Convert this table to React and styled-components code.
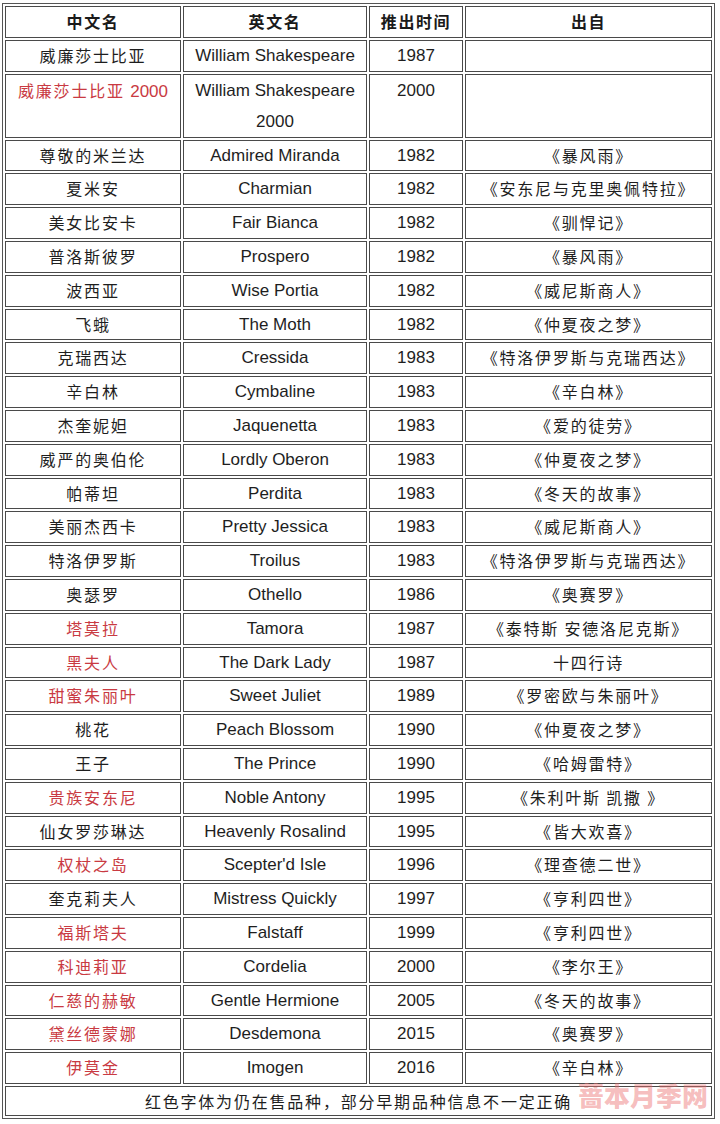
import React from "react"
import styled, { createGlobalStyle } from "styled-components"

const GlobalStyle = createGlobalStyle`
  html, body {
    margin: 0;
    padding: 0;
    background: #fff;
  }
  body {
    font-family: "Liberation Sans", "Noto Sans CJK SC", sans-serif;
    color: #222;
  }
`

const Wrap = styled.div`
  position: relative;
  width: 720px;
  padding: 3px 0 0 2px;
  box-sizing: border-box;
`

const Table = styled.table`
  border-collapse: separate;
  border-spacing: 2px;
  border: 1px solid #555;
  table-layout: fixed;
  width: 713px;
`

const Cell = styled.td`
  border: 1px solid #4a4a4a;
  padding: 0;
  text-align: center;
  vertical-align: top;
  line-height: ${(props) => (props.tall ? "31px" : "29.8px")};
  box-sizing: border-box;
  font-size: ${(props) => (props.cn ? "16px" : "17px")};
  font-family: ${(props) =>
    props.cn
      ? `"Noto Sans CJK SC", sans-serif`
      : `"Liberation Sans", "Noto Sans CJK SC", sans-serif`};
  letter-spacing: ${(props) => (props.cn ? "1.8px" : "0")};
  color: ${(props) => (props.red ? "#c93a42" : "#1e1e1e")};
  overflow: hidden;
`

const Head = styled.th`
  border: 1px solid #4a4a4a;
  padding: 0;
  text-align: center;
  line-height: 29.8px;
  box-sizing: border-box;
  font-family: "Noto Sans CJK SC", sans-serif;
  font-size: 16px;
  font-weight: 700;
  letter-spacing: 1.6px;
  color: #1a1a1a;
  width: ${(props) => props.w}px;
`

const Num = styled.span`
  font-family: "Liberation Sans", sans-serif;
  font-size: 17px;
  letter-spacing: 0;
`

const Note = styled.td`
  border: 1px solid #4a4a4a;
  padding: 0;
  text-align: center;
  line-height: 28px;
  font-family: "Noto Sans CJK SC", sans-serif;
  font-size: 16px;
  letter-spacing: 1.8px;
  color: #1e1e1e;
`

const Watermark = styled.div`
  position: absolute;
  right: 12px;
  bottom: 12px;
  font-family: "Noto Sans CJK SC", sans-serif;
  font-weight: 900;
  font-size: 26px;
  line-height: 24px;
  color: rgba(236, 110, 110, 0.45);
  pointer-events: none;
`

const rows = [
  ["尊敬的米兰达", "Admired Miranda", "1982", "《暴风雨》"],
  ["夏米安", "Charmian", "1982", "《安东尼与克里奥佩特拉》"],
  ["美女比安卡", "Fair Bianca", "1982", "《驯悍记》"],
  ["普洛斯彼罗", "Prospero", "1982", "《暴风雨》"],
  ["波西亚", "Wise Portia", "1982", "《威尼斯商人》"],
  ["飞蛾", "The Moth", "1982", "《仲夏夜之梦》"],
  ["克瑞西达", "Cressida", "1983", "《特洛伊罗斯与克瑞西达》"],
  ["辛白林", "Cymbaline", "1983", "《辛白林》"],
  ["杰奎妮妲", "Jaquenetta", "1983", "《爱的徒劳》"],
  ["威严的奥伯伦", "Lordly Oberon", "1983", "《仲夏夜之梦》"],
  ["帕蒂坦", "Perdita", "1983", "《冬天的故事》"],
  ["美丽杰西卡", "Pretty Jessica", "1983", "《威尼斯商人》"],
  ["特洛伊罗斯", "Troilus", "1983", "《特洛伊罗斯与克瑞西达》"],
  ["奥瑟罗", "Othello", "1986", "《奥赛罗》"],
  ["塔莫拉", "Tamora", "1987", "《泰特斯 安德洛尼克斯》", true],
  ["黑夫人", "The Dark Lady", "1987", "十四行诗", true],
  ["甜蜜朱丽叶", "Sweet Juliet", "1989", "《罗密欧与朱丽叶》", true],
  ["桃花", "Peach Blossom", "1990", "《仲夏夜之梦》"],
  ["王子", "The Prince", "1990", "《哈姆雷特》"],
  ["贵族安东尼", "Noble Antony", "1995", "《朱利叶斯 凯撒 》", true],
  ["仙女罗莎琳达", "Heavenly Rosalind", "1995", "《皆大欢喜》"],
  ["权杖之岛", "Scepter'd Isle", "1996", "《理查德二世》", true],
  ["奎克莉夫人", "Mistress Quickly", "1997", "《亨利四世》"],
  ["福斯塔夫", "Falstaff", "1999", "《亨利四世》", true],
  ["科迪莉亚", "Cordelia", "2000", "《李尔王》", true],
  ["仁慈的赫敏", "Gentle Hermione", "2005", "《冬天的故事》", true],
  ["黛丝德蒙娜", "Desdemona", "2015", "《奥赛罗》", true],
  ["伊莫金", "Imogen", "2016", "《辛白林》", true],
]

export default function App() {
  return (
    <Wrap>
      <GlobalStyle />
      <Table>
        <thead>
          <tr>
            <Head w={176}>中文名</Head>
            <Head w={184}>英文名</Head>
            <Head w={94}>推出时间</Head>
            <Head w={247}>出自</Head>
          </tr>
        </thead>
        <tbody>
          <tr>
            <Cell cn>威廉莎士比亚</Cell>
            <Cell>William Shakespeare</Cell>
            <Cell>1987</Cell>
            <Cell cn></Cell>
          </tr>
          <tr>
            <Cell cn red tall>
              威廉莎士比亚 <Num>2000</Num>
            </Cell>
            <Cell tall>
              William Shakespeare
              <br />
              2000
            </Cell>
            <Cell tall>2000</Cell>
            <Cell cn tall></Cell>
          </tr>
          {rows.map((r, i) => (
            <tr key={i}>
              <Cell cn red={r[4]}>{r[0]}</Cell>
              <Cell>{r[1]}</Cell>
              <Cell>{r[2]}</Cell>
              <Cell cn>{r[3]}</Cell>
            </tr>
          ))}
          <tr>
            <Note colSpan={4}>红色字体为仍在售品种，部分早期品种信息不一定正确</Note>
          </tr>
        </tbody>
      </Table>
      <Watermark>蔷本月季网</Watermark>
    </Wrap>
  )
}
